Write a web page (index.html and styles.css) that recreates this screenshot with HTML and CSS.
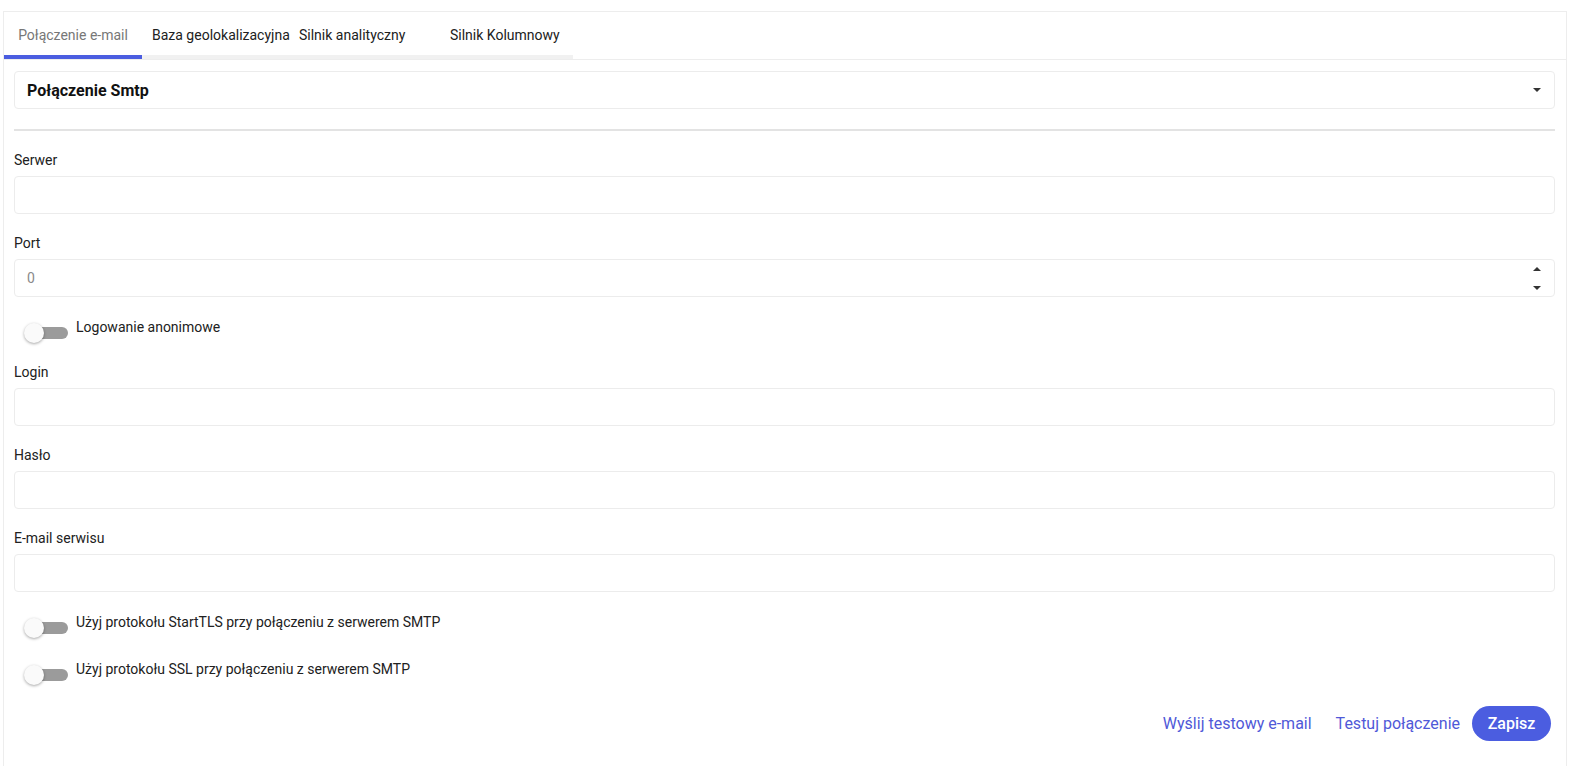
FILE: index.html
```html
<!DOCTYPE html>
<html lang="pl">
<head>
  <meta charset="UTF-8" />
  <meta name="viewport" content="width=device-width, initial-scale=1.0" />
  <title>Ustawienia - Połączenie e-mail</title>
  <link rel="stylesheet" href="styles.css">
</head>
<body>
  <div class="card">
    <!-- Tabs -->
    <div class="tab-header">
      <div class="tabs">
        <div class="tab tab-email active">Połączenie e-mail</div>
        <div class="tab tab-geo">Baza geolokalizacyjna</div>
        <div class="tab tab-analytic">Silnik analityczny</div>
        <div class="tab tab-column">Silnik Kolumnowy</div>
      </div>
    </div>

    <div class="card-body">
      <!-- Expansion panel header -->
      <div class="panel-header">
        <span class="panel-title">Połączenie Smtp</span>
        <span class="caret-down"></span>
      </div>
      <div class="divider"></div>

      <div class="form">
        <div class="field">
          <label class="field-label">Serwer</label>
          <div class="input"></div>
        </div>

        <div class="field">
          <label class="field-label">Port</label>
          <div class="input">
            <span class="input-value">0</span>
            <span class="spinner">
              <span class="caret-up"></span>
              <span class="caret-down"></span>
            </span>
          </div>
        </div>

        <div class="toggle-row">
          <span class="toggle"><span class="toggle-track"></span><span class="toggle-thumb"></span></span>
          <span class="toggle-label">Logowanie anonimowe</span>
        </div>

        <div class="field">
          <label class="field-label">Login</label>
          <div class="input"></div>
        </div>

        <div class="field">
          <label class="field-label">Hasło</label>
          <div class="input"></div>
        </div>

        <div class="field">
          <label class="field-label">E-mail serwisu</label>
          <div class="input"></div>
        </div>

        <div class="toggle-row">
          <span class="toggle"><span class="toggle-track"></span><span class="toggle-thumb"></span></span>
          <span class="toggle-label">Użyj protokołu StartTLS przy połączeniu z serwerem SMTP</span>
        </div>

        <div class="toggle-row">
          <span class="toggle"><span class="toggle-track"></span><span class="toggle-thumb"></span></span>
          <span class="toggle-label">Użyj protokołu SSL przy połączeniu z serwerem SMTP</span>
        </div>

        <div class="actions">
          <button class="text-button">Wyślij testowy e-mail</button>
          <button class="text-button">Testuj połączenie</button>
          <button class="save-button">Zapisz</button>
        </div>
      </div>
    </div>
  </div>
</body>
</html>
```

FILE: styles.css
```css
* {
  margin: 0;
  padding: 0;
  box-sizing: border-box;
  font-family: Roboto, "Liberation Sans", sans-serif;
}

html, body {
  overflow: hidden;
}

body {
  background: #ffffff;
  color: #212121;
  padding: 11px 0 0 3px;
}

.card {
  width: 1564px;
  border: 1px solid #ededed;
  background: #fff;
}

/* Tabs */
.tab-header {
  border-bottom: 1px solid #ededed;
}

.tabs {
  display: flex;
  width: 569px;
  border-bottom: 4px solid #f1f1f1;
}

.tab {
  height: 40px;
  padding-top: 3px;
  margin-bottom: -4px;
  border-bottom: 4px solid transparent;
  font-size: 14px;
  line-height: 40px;
  color: #212121;
  box-sizing: content-box;
  white-space: nowrap;
}

.tab.active {
  color: #777;
  border-bottom-color: #4b5de0;
}

.tab-email {
  width: 138px;
  text-align: center;
}

.tab-geo {
  padding-left: 10px;
  width: 145px;
}

.tab-analytic {
  padding-left: 2px;
  width: 151px;
}

.tab-column {
  flex: 1;
}

/* Body */
.card-body {
  padding: 11px 11px 28px 10px;
}

.panel-header {
  height: 38px;
  border: 1px solid #ececec;
  border-radius: 4px;
  display: flex;
  align-items: center;
  justify-content: space-between;
  padding: 0 13px 0 12px;
}

.panel-title {
  font-size: 16px;
  font-weight: 700;
  color: #111;
}

.caret-down,
.caret-up {
  display: block;
  width: 0;
  height: 0;
  border-left: 4px solid transparent;
  border-right: 4px solid transparent;
}

.caret-down {
  border-top: 4px solid #333;
}

.caret-up {
  border-bottom: 4px solid #333;
}

.divider {
  margin-top: 20px;
  height: 2px;
  background: #e3e3e3;
}

.form {
  display: flex;
  flex-direction: column;
}

.field {
  margin-top: 19px;
}

.field-label {
  display: block;
  font-size: 14px;
  line-height: 20px;
  margin-bottom: 6px;
}

.input {
  height: 38px;
  border: 1px solid #ececec;
  border-radius: 4px;
  display: flex;
  align-items: center;
  justify-content: space-between;
  padding: 0 13px 0 12px;
}

.input-value {
  font-size: 14px;
  color: #8a8a8a;
}

.spinner {
  display: flex;
  flex-direction: column;
  gap: 15px;
}

/* Slide toggles */
.toggle-row {
  display: flex;
  align-items: flex-start;
  margin-top: 20px;
}

.toggle-row + .toggle-row {
  margin-top: 21px;
}

.toggle {
  position: relative;
  width: 44px;
  height: 20px;
  margin: 6px 8px 0 10px;
  flex-shrink: 0;
}

.toggle-track {
  position: absolute;
  left: 4px;
  right: 0;
  top: 4px;
  height: 12px;
  border-radius: 6px;
  background: #9b9b9b;
}

.toggle-thumb {
  position: absolute;
  left: 0;
  top: 0;
  width: 20px;
  height: 20px;
  border-radius: 50%;
  background: #fafafa;
  box-shadow: 0 1px 3px rgba(0, 0, 0, 0.35);
}

.toggle-label {
  font-size: 14px;
  line-height: 20px;
}

/* Buttons */
.actions {
  display: flex;
  justify-content: flex-end;
  align-items: center;
  margin-top: 21px;
  padding-right: 4px;
}

.text-button {
  background: none;
  border: none;
  padding: 0 12px;
  font-size: 16px;
  color: #5059d8;
  cursor: pointer;
  height: 35px;
}

.save-button {
  background: #4b5de0;
  color: #fff;
  border: none;
  border-radius: 18px;
  height: 35px;
  width: 79px;
  font-size: 16px;
  font-weight: 500;
  cursor: pointer;
}
```
